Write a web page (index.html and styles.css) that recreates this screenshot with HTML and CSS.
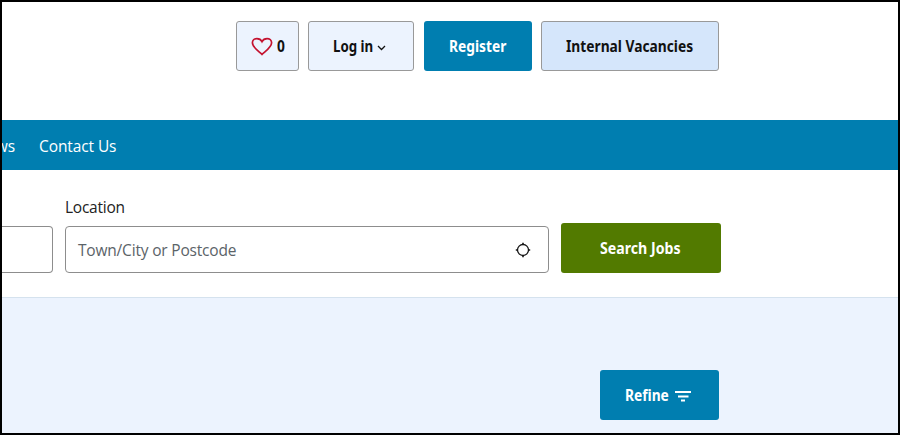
FILE: index.html
```html
<!DOCTYPE html>
<html lang="en">
<head>
<meta charset="utf-8">
<title>Job search</title>
<link rel="stylesheet" href="styles.css">
</head>
<body>
<div class="page">
  <header class="top">
    <a class="btn pale saved"><svg width="22" height="20" viewBox="0 0 22 20"><path d="M11 18.500C7 14.800 1.400 11.200 1.400 6.800C1.400 4.200 3.500 2.600 5.900 2.600C8.400 2.600 10.200 4 11 5.600C11.800 4 13.600 2.600 16.100 2.600C18.500 2.600 20.600 4.200 20.600 6.800C20.600 11.200 15 14.800 11 18.500Z" fill="none" stroke="#c4122f" stroke-width="1.7"/></svg><span class="label zero">0</span></a>
    <a class="btn pale login"><span class="label w-login">Log in</span><svg width="9" height="6" viewBox="0 0 9 6"><path d="M1 1l3.5 3.5L8 1" fill="none" stroke="#111" stroke-width="1.3"/></svg></a>
    <a class="btn blue register"><span class="label w-register">Register</span></a>
    <a class="btn internal"><span class="label w-internal">Internal Vacancies</span></a>
  </header>
  <nav class="nav"><a class="news">ws</a><a>Contact Us</a></nav>
  <section class="search">
    <div class="field previous"></div>
    <div class="location">
      <label>Location</label>
      <div class="field"><span>Town/City or Postcode</span><svg width="16" height="16" viewBox="0 0 16 16"><circle cx="8" cy="8" r="5.500" fill="none" stroke="#151515" stroke-width="1.3"/><path d="M8 .8v2M8 13.2v2M.8 8h2M13.2 8h2" stroke="#151515" stroke-width="1.6"/></svg></div>
    </div>
    <a class="btn green"><span class="label w-search">Search Jobs</span></a>
  </section>
  <main class="results">
    <a class="btn blue refine"><span class="label w-refine">Refine</span><svg width="16" height="12" viewBox="0 0 16 12"><path d="M0 2h16M3 6.500h10.500M6 10.500h4" stroke="#fff" stroke-width="1.8" fill="none"/></svg></a>
  </main>
</div>
</body>
</html>
```
FILE: styles.css
```css
* { box-sizing: border-box; }
body { margin: 0; font: 15.5px/22px "Open Sans", "Noto Sans", sans-serif; letter-spacing: -.1px; color: #222; }
.page { width: 900px; height: 435px; border: 2px solid #000; background: #fff; overflow: hidden; display: flex; flex-direction: column; }
.top { height: 118px; padding: 19px 0 0 234px; display: flex; align-items: flex-start; }
.btn { height: 50px; display: flex; align-items: center; border-radius: 3px; font: 700 16px/22px "Noto Sans", sans-serif; letter-spacing: 0; color: #111; }
.label { display: block; white-space: nowrap; transform-origin: left center; transform: scaleX(.86); }
.pale { background: #ecf3fe; border: 1px solid #999; }
.saved { width: 63px; padding-left: 14px; margin-right: 9px; }
.zero { margin-left: 4px; }
.login { width: 106px; padding-left: 24px; margin-right: 10px; }
.w-login { width: 44px; transform: scaleX(.83); }
.login svg { margin-top: 3px; }
.blue { background: #007eb0; color: #fff; }
.register { width: 108px; padding-left: 25px; margin-right: 9px; }
.internal { width: 178px; padding-left: 24px; background: #d5e6fb; border: 1px solid #999; }
.nav { height: 50px; flex: none; padding-top: 1px; background: #007eb0; color: #fff; display: flex; align-items: center; gap: 24px; }
.news { width: 13px; display: flex; justify-content: flex-end; }
.search { height: 128px; flex: none; border-bottom: 1px solid #d5e2ee; display: flex; align-items: flex-start; }
.field { height: 47px; border: 1px solid #8d8d8d; border-radius: 4px; background: #fff; }
.previous { width: 51px; margin: 56px 12px 0 0; border-left: 0; border-radius: 0 4px 4px 0; }
.location { width: 484px; margin-right: 12px; padding-top: 26px; }
.location label { display: block; height: 30px; letter-spacing: -.25px; }
.location .field { display: flex; align-items: center; justify-content: space-between; padding: 1px 17px 0 12px; color: #5b6368; letter-spacing: -.19px; }
.green { width: 160px; margin-top: 53px; padding-left: 39px; background: #527a00; color: #fff; }
.w-search { transform: scaleX(.885); }
.results { flex: 1; background: #ecf3fe; padding: 72px 0 0 598px; }
.refine { width: 119px; padding-left: 25px; }
.w-refine { width: 50px; }
.refine svg { margin-top: 2px; }
```
